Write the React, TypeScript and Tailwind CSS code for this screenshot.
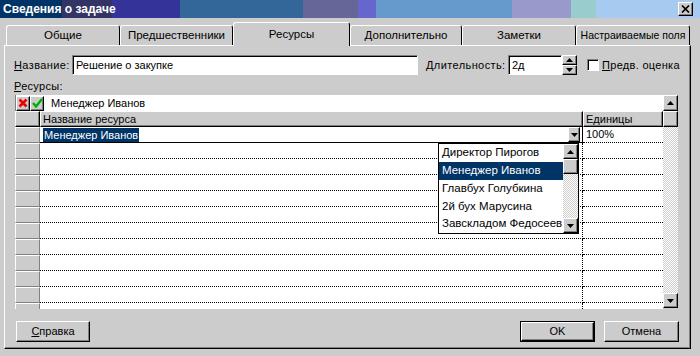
const raised =
  "border border-t-white border-l-white border-r-black border-b-black shadow-[inset_-1px_-1px_0_#808080] bg-[#cccccc]";
const sunken =
  "border border-t-[#808080] border-l-[#808080] border-r-white border-b-white shadow-[inset_1px_1px_0_#000] bg-white";
const checker =
  "bg-[repeating-conic-gradient(#cccccc_0_25%,#ffffff_0_50%)] bg-size-[2px_2px]";

const Up = () => (
  <svg width="7" height="4" viewBox="0 0 7 4">
    <path d="M0 4L3.5 0L7 4Z" fill="#000" />
  </svg>
);

const Down = () => (
  <svg width="7" height="4" viewBox="0 0 7 4">
    <path d="M0 0L3.5 4L7 0Z" fill="#000" />
  </svg>
);

const tabs = [
  { label: "Общие", w: "w-[114px] text-[11.5px]" },
  { label: "Предшественники", w: "w-[113px] text-[11.5px]" },
  { label: "Ресурсы", w: "w-[117px] text-[11.5px]", active: true },
  { label: "Дополнительно", w: "w-[112px] text-[11.5px]" },
  { label: "Заметки", w: "w-[114px] text-[11.5px]" },
  { label: "Настраиваемые поля", w: "w-[114px] text-[10.5px]" },
];

const options = [
  "Директор Пирогов",
  "Менеджер Иванов",
  "Главбух Голубкина",
  "2й бух Марусина",
  "Завскладом Федосеев",
];

const rows = Array.from({ length: 12 }, (_, i) => i);

const App = () => {
  return (
    <div className="w-[700px] h-[356px] bg-[#cccccc] overflow-hidden whitespace-nowrap font-['Liberation_Sans',Arial,sans-serif] text-[11px] text-black">
      {/* title bar */}
      <div className="h-[18px] flex items-center justify-between pl-[3px] pr-[7px] bg-[linear-gradient(90deg,#003366_0_62px,#333366_62px_112px,#333399_112px_180px,#336699_180px_303px,#666699_303px_358px,#6666cc_358px_376px,#6699cc_376px_512px,#9999cc_512px_571px,#99cccc_571px_596px,#a6caf0_596px)]">
        <span className="text-white font-bold text-[12px]">Сведения о задаче</span>
        <div className={`${raised} w-[15px] h-[14px] flex items-center justify-center`}>
          <svg width="9" height="8" viewBox="0 0 9 8">
            <path d="M1 0.5L8 7.5M8 0.5L1 7.5" stroke="#000" strokeWidth="1.7" />
          </svg>
        </div>
      </div>

      {/* tabs */}
      <div className="mt-[4px] pl-[6px] flex items-end">
        {tabs.map((t) => (
          <div
            key={t.label}
            className={`${t.w} ${
              t.active ? "h-[24px] -mb-px relative z-10" : "h-[20px]"
            } flex items-center justify-center bg-[#cccccc] border-t border-l border-r border-t-white border-l-white border-r-black rounded-t-[3px]`}
          >
            {t.label}
          </div>
        ))}
      </div>

      {/* panel */}
      <div className="ml-[4px] w-[687px] h-[304px] border border-t-white border-l-white border-r-black border-b-black shadow-[inset_-1px_-1px_0_#808080] flex flex-col">
        <div className="mt-[9px] pl-[9px] flex items-center h-[20px]">
          <span className="w-[58px] tracking-[0.4px]">
            <u>Н</u>азвание:
          </span>
          <div className={`${sunken} w-[346px] h-[20px] pl-[3px] flex items-center`}>
            Решение о закупке
          </div>
          <span className="ml-[8px] w-[82px] tracking-[0.4px]">
            <u>Д</u>лительность:
          </span>
          <div className={`${sunken} w-[54px] h-[20px] pl-[3px] flex items-center`}>2д</div>
          <div className="w-[15px] h-[20px] flex flex-col">
            <div className={`${raised} h-[10px] flex items-center justify-center`}>
              <Up />
            </div>
            <div className={`${raised} h-[10px] flex items-center justify-center`}>
              <Down />
            </div>
          </div>
          <div className={`${sunken} ml-[10px] w-[12px] h-[12px]`} />
          <span className="ml-[3px] tracking-[0.3px]">
            <u>П</u>редв. оценка
          </span>
        </div>

        <div className="mt-[4px] pl-[9px] h-[15px] leading-[15px] tracking-[0.3px]">
          <u>Р</u>есурсы:
        </div>

        {/* grid */}
        <div className="mt-[1px] ml-[10px] w-[663px] h-[214px] flex">
          <div className="relative w-[648px] flex flex-col">
            <div className="h-[16px] bg-white flex items-center border-l border-[#808080]">
              <div className={`${raised} w-[14px] h-[15px] flex items-center justify-center`}>
                <svg width="10" height="10" viewBox="0 0 10 10">
                  <path d="M1.5 1.5L8.5 8.5M8.5 1.5L1.5 8.5" stroke="#ee0000" strokeWidth="2.6" />
                </svg>
              </div>
              <div className={`${raised} w-[14px] h-[15px] flex items-center justify-center`}>
                <svg width="11" height="10" viewBox="0 0 11 10">
                  <path d="M1 5L4 8.5L10 1" stroke="#00b000" strokeWidth="2.4" fill="none" />
                </svg>
              </div>
              <span className="pl-[7px]">Менеджер Иванов</span>
            </div>

            <div className="h-[16px] flex">
              <div className={`${raised} w-[25px]`} />
              <div className={`${raised} w-[543px] pl-[2px] leading-[14px]`}>Название ресурса</div>
              <div className={`${raised} w-[80px] pl-[2px] leading-[14px]`}>Единицы</div>
            </div>

            <div className="flex-1 overflow-hidden bg-white">
              {rows.map((r) => (
                <div key={r} className="h-[16px] flex">
                  <div className="w-[25px] bg-[#cccccc] border border-t-white border-l-white border-r-[#808080] border-b-[#808080]" />
                  <div
                    className={`w-[543px] flex items-center justify-between border-r border-dotted border-r-black border-b border-b-black ${
                      r === 0 ? "border-solid" : ""
                    }`}
                  >
                    {r === 0 && (
                      <>
                        <span className="ml-[3px] bg-[#003366] text-white leading-[14px] px-px">
                          Менеджер Иванов
                        </span>
                        <div className={`${raised} mr-[2px] w-[12px] h-[15px] flex items-center justify-center`}>
                          <Down />
                        </div>
                      </>
                    )}
                  </div>
                  <div className="w-[80px] border-b border-dotted border-b-black pl-[3px] leading-[15px]">
                    {r === 0 ? "100%" : ""}
                  </div>
                </div>
              ))}
            </div>

            {/* dropdown list */}
            <div className="absolute left-[423px] top-[48px] w-[141px] h-[91px] bg-white border border-black flex z-20">
              <div className="flex-1 flex flex-col">
                {options.map((o, i) => (
                  <div
                    key={o}
                    className={`h-[18px] pl-[3px] flex items-center text-[11.5px] ${
                      i === 1 ? "bg-[#003366] text-white" : ""
                    }`}
                  >
                    {o}
                  </div>
                ))}
              </div>
              <div className="w-[15px] flex flex-col">
                <div className={`${raised} h-[15px] flex items-center justify-center`}>
                  <Up />
                </div>
                <div className={`${raised} h-[15px]`} />
                <div className={`flex-1 ${checker}`} />
                <div className={`${raised} h-[15px] flex items-center justify-center`}>
                  <Down />
                </div>
              </div>
            </div>
          </div>

          {/* vertical scrollbar */}
          <div className="w-[15px] h-[213px] flex flex-col">
            <div className={`${raised} h-[16px] flex items-center justify-center`}>
              <Up />
            </div>
            <div className={`${raised} h-[16px]`} />
            <div className={`flex-1 ${checker}`} />
            <div className={`${raised} h-[15px] flex items-center justify-center`}>
              <Down />
            </div>
          </div>
        </div>

        {/* buttons */}
        <div className="mt-[12px] pl-[11px] pr-[11px] flex">
          <div className={`${raised} w-[74px] h-[21px] flex items-center justify-center`}>
            <span>
              <u>С</u>правка
            </span>
          </div>
          <div className="ml-auto w-[75px] h-[21px] border border-black">
            <div className={`${raised} w-full h-full flex items-center justify-center`}>OK</div>
          </div>
          <div className={`${raised} ml-[9px] w-[75px] h-[21px] flex items-center justify-center`}>
            Отмена
          </div>
        </div>
      </div>
    </div>
  );
};

export default App;
